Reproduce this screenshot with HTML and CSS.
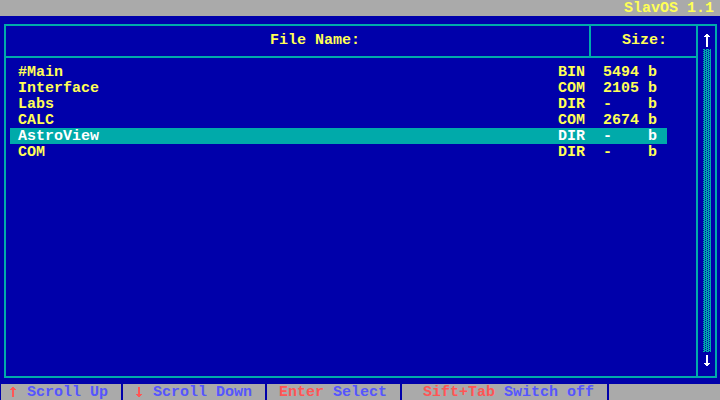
FILE: index.html
```html
<!DOCTYPE html>
<html>
<head>
<meta charset="utf-8">
<link rel="stylesheet" href="styles.css">
</head>
<body>
<div class="screen">
  <div class="topbar"><span class="title">SlavOS 1.1</span></div>
  <div class="main">
    <div class="frame">
      <div class="panel">
        <div class="header">
          <div class="h-name">File Name:</div>
          <div class="h-size">Size:</div>
        </div>
        <div class="list">
          <div class="row"><span class="c-name">#Main</span><span class="c-type">BIN</span><span class="c-size">5494</span><span class="c-unit">b</span></div>
          <div class="row"><span class="c-name">Interface</span><span class="c-type">COM</span><span class="c-size">2105</span><span class="c-unit">b</span></div>
          <div class="row"><span class="c-name">Labs</span><span class="c-type">DIR</span><span class="c-size">-</span><span class="c-unit">b</span></div>
          <div class="row"><span class="c-name">CALC</span><span class="c-type">COM</span><span class="c-size">2674</span><span class="c-unit">b</span></div>
          <div class="row selected"><span class="c-name">AstroView</span><span class="c-type">DIR</span><span class="c-size">-</span><span class="c-unit">b</span></div>
          <div class="row"><span class="c-name">COM</span><span class="c-type">DIR</span><span class="c-size">-</span><span class="c-unit">b</span></div>
        </div>
      </div>
      <div class="scroll">
        <svg class="arrow-up" width="8" height="13" viewBox="0 0 8 13" shape-rendering="crispEdges"><rect x="3" y="0" width="2" height="13" fill="#fff"/><rect x="2" y="1" width="4" height="1" fill="#fff"/><rect x="1" y="2" width="6" height="1" fill="#fff"/></svg>
        <svg class="track" width="9" height="303" viewBox="0 0 9 303" shape-rendering="crispEdges">
          <defs>
            <pattern id="shade" x="0" y="0" width="4" height="2" patternUnits="userSpaceOnUse">
              <rect x="0" y="0" width="4" height="2" fill="#00aaaa"/>
              <rect x="2" y="0" width="1" height="1" fill="#0000aa"/>
              <rect x="0" y="1" width="1" height="1" fill="#0000aa"/>
            </pattern>
          </defs>
          <rect x="0" y="0" width="8" height="303" fill="url(#shade)"/>
        </svg>
        <svg class="arrow-down" width="8" height="11" viewBox="0 0 8 11" shape-rendering="crispEdges"><rect x="3" y="0" width="2" height="11" fill="#fff"/><rect x="2" y="9" width="4" height="1" fill="#fff"/><rect x="1" y="8" width="6" height="1" fill="#fff"/></svg>
      </div>
    </div>
  </div>
  <div class="bottombar">
    <div class="key k1"><svg class="barrow" width="9" height="10" viewBox="0 0 9 10" shape-rendering="crispEdges"><rect x="3" y="0" width="2" height="10" fill="#ff5555"/><rect x="2" y="1" width="4" height="1" fill="#ff5555"/><rect x="1" y="2" width="6" height="1" fill="#ff5555"/></svg> Scroll Up</div>
    <div class="sep"></div>
    <div class="key k2"><svg class="barrow" width="9" height="10" viewBox="0 0 9 10" shape-rendering="crispEdges"><rect x="3" y="0" width="2" height="10" fill="#ff5555"/><rect x="2" y="8" width="4" height="1" fill="#ff5555"/><rect x="1" y="7" width="6" height="1" fill="#ff5555"/></svg> Scroll Down</div>
    <div class="sep"></div>
    <div class="key k3"><span class="hot">Enter</span> Select</div>
    <div class="sep"></div>
    <div class="key k4"><span class="hot">Sift+Tab</span> Switch off</div>
    <div class="sep"></div>
    <div class="key k5"></div>
  </div>
</div>
</body>
</html>
```
FILE: styles.css
```css
html, body {
  margin: 0;
  padding: 0;
  background: #0000aa;
}
.screen {
  width: 720px;
  height: 400px;
  display: flex;
  flex-direction: column;
  font-family: "Liberation Mono", "DejaVu Sans Mono", monospace;
  font-weight: bold;
  font-size: 15px;
  line-height: 16px;
  overflow: hidden;
}
.topbar {
  height: 16px;
  background: #aaaaaa;
  display: flex;
  justify-content: flex-end;
}
.title {
  color: #ffff55;
  width: 96px;
  padding-top: 1px;
}
.main {
  height: 368px;
  box-sizing: border-box;
  padding: 8px 3px 6px 4px;
  background: #0000aa;
}
.frame {
  height: 100%;
  box-sizing: border-box;
  border: 2px solid #00aaaa;
  display: flex;
}
.panel {
  width: 692px;
  box-sizing: border-box;
  border-right: 2px solid #00aaaa;
  display: flex;
  flex-direction: column;
}
.header {
  height: 30px;
  border-bottom: 2px solid #00aaaa;
  display: flex;
  color: #ffff55;
}
.h-name {
  width: 585px;
  border-right: 2px solid #00aaaa;
  box-sizing: border-box;
  padding: 7px 0 0 264px;
}
.h-size {
  flex: 1;
  padding: 7px 0 0 31px;
}
.list {
  padding-top: 6px;
}
.row {
  display: flex;
  height: 16px;
  margin-left: 4px;
  width: 657px;
  box-sizing: border-box;
  padding-left: 8px;
  padding-top: 1px;
  color: #ffff55;
}
.row.selected {
  background: #00aaaa;
  color: #ffffff;
}
.c-name { width: 540px; }
.c-type { width: 45px; }
.c-size { width: 45px; }
.c-unit { width: 9px; }
.scroll {
  flex: 1;
  display: flex;
  flex-direction: column;
  align-items: flex-start;
  padding-top: 8px;
}
.scroll svg {
  display: block;
}
.arrow-up {
  margin-left: 5px;
}
.track {
  margin: 2px 0 0 5px;
}
.arrow-down {
  margin: 3px 0 0 5px;
}
.bottombar {
  height: 16px;
  background: #aaaaaa;
  display: flex;
  color: #5555ff;
  border-left: 1px solid #0000aa;
}
.hot { color: #ff5555; }
.key {
  white-space: pre;
  box-sizing: border-box;
  padding-top: 1px;
}
.barrow {
  display: inline-block;
  vertical-align: -1px;
}
.k1 { width: 120px; padding-left: 8px; }
.k2 { width: 142px; padding-left: 12px; }
.k3 { width: 133px; padding-left: 12px; }
.k4 { width: 205px; padding-left: 21px; }
.k5 { flex: 1; }
.sep {
  width: 2px;
  background: #0000aa;
}
```
